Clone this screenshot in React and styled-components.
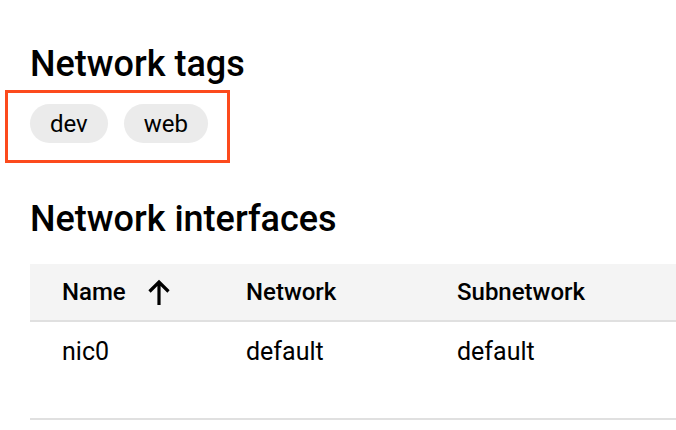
import React from 'react';
import styled, { createGlobalStyle } from 'styled-components';

const GlobalStyle = createGlobalStyle`
  body {
    margin: 0;
    background: #fff;
    font-family: Roboto, "Liberation Sans", sans-serif;
    color: #000;
  }
`;

const Page = styled.div`
  width: 676px;
  height: 430px;
  overflow: hidden;
  padding: 42px 0 0 30px;
  box-sizing: border-box;
`;

const Heading = styled.h2`
  margin: 0;
  font-size: 36px;
  font-weight: 500;
  line-height: 44px;
  letter-spacing: 0;
`;

const TagsBox = styled.div`
  display: inline-flex;
  gap: 16px;
  margin: 4px 0 0 -25px;
  padding: 11px 19px 17px 22px;
  border: 3px solid #fc4a1c;
`;

const Chip = styled.span`
  display: inline-flex;
  align-items: center;
  height: 39px;
  padding: 0 20px;
  border-radius: 20px;
  background: #ebebeb;
  font-size: 24px;
`;

const Section = styled.div`
  margin-top: 34px;
`;

const Table = styled.div`
  margin-top: 23px;
  margin-right: -30px;
`;

const Row = styled.div`
  display: grid;
  grid-template-columns: 184px 211px 1fr;
  align-items: ${(p) => (p.$head ? 'center' : 'start')};
  height: ${(p) => (p.$head ? '56px' : '98px')};
  background: ${(p) => (p.$head ? '#f4f4f4' : 'transparent')};
  border-bottom: 2px solid #e0e0e0;
  box-sizing: ${(p) => (p.$head ? 'content-box' : 'border-box')};
`;

const Cell = styled.div`
  display: flex;
  align-items: center;
  gap: 21px;
  padding: ${(p) => (p.$head ? '0 0 0 32px' : '15px 0 0 32px')};
  font-size: ${(p) => (p.$head ? '24px' : '25px')};
  font-weight: ${(p) => (p.$head ? 500 : 400)};
`;

const ArrowUp = () => (
  <svg width="24" height="28" viewBox="0 0 24 28">
    <path d="M12 27V4M2.5 13.5L12 4l9.5 9.5" fill="none" stroke="#000" strokeWidth="3.2" />
  </svg>
);

export default function App() {
  return (
    <Page>
      <GlobalStyle />
      <Heading>Network tags</Heading>
      <TagsBox>
        <Chip>dev</Chip>
        <Chip>web</Chip>
      </TagsBox>
      <Section>
        <Heading>Network interfaces</Heading>
        <Table>
          <Row $head>
            <Cell $head>
              Name <ArrowUp />
            </Cell>
            <Cell $head>Network</Cell>
            <Cell $head>Subnetwork</Cell>
          </Row>
          <Row>
            <Cell>nic0</Cell>
            <Cell>default</Cell>
            <Cell>default</Cell>
          </Row>
        </Table>
      </Section>
    </Page>
  );
}
